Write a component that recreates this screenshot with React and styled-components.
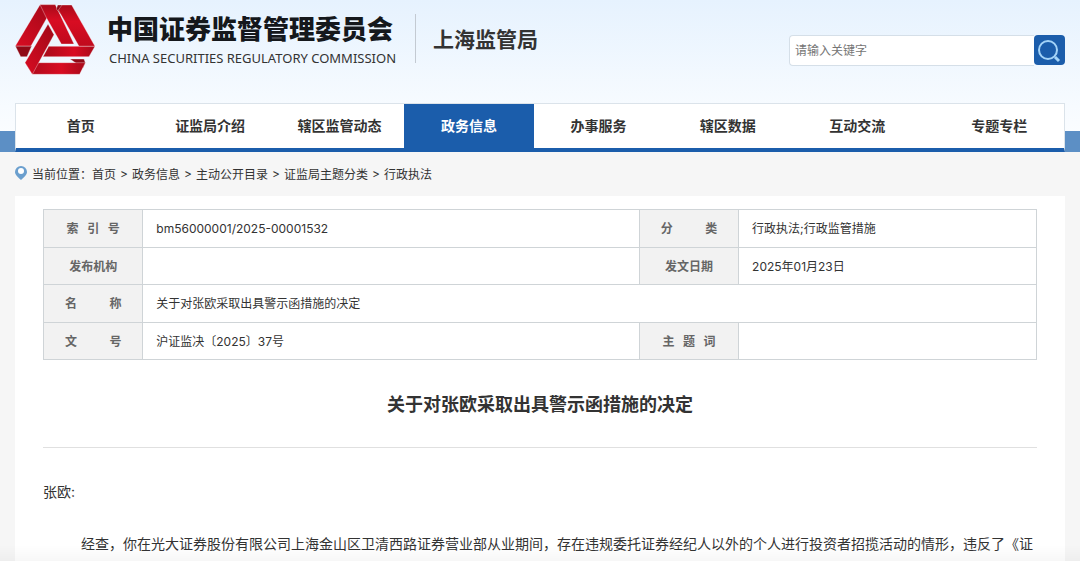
import React from 'react';
import styled, { createGlobalStyle } from 'styled-components';

const GlobalStyle = createGlobalStyle`
  * {
    box-sizing: border-box;
  }

  body {
    margin: 0;
    background: #f6f6f6;
    color: #333;
    font-family: Inter, 'Noto Sans CJK SC', sans-serif;
    font-size: 12px;
  }

  a {
    color: inherit;
    text-decoration: none;
  }
`;

const Page = styled.div`
  min-height: 100vh;
  display: flex;
  flex-direction: column;
`;

const Header = styled.header`
  background: linear-gradient(#e6f2fe, #f7fbff 70%, #fdfeff);
`;

const Masthead = styled.div`
  display: flex;
  align-items: flex-start;
  height: 103px;
  padding: 4px 15px 0;
`;

const Emblem = styled.svg`
  flex: none;
  width: 81px;
  height: 72px;
`;

const Brand = styled.a`
  margin: 8px 0 0 11px;
  color: #15181c;
`;

const BrandName = styled.div`
  font-size: 26px;
  line-height: 36px;
  font-weight: 900;
  white-space: nowrap;
`;

const BrandLatin = styled.div`
  padding-left: 2px;
  color: #333;
  font-family: 'Noto Sans', sans-serif;
  font-size: 13px;
  line-height: 20px;
  white-space: nowrap;
`;

const Bureau = styled.div`
  display: flex;
  align-items: flex-end;
  height: 49px;
  margin: 10px 0 0 19px;
  padding-left: 17px;
  border-left: 1px solid #c3cad2;
  font-size: 21px;
  line-height: 46px;
  font-weight: 700;
  white-space: nowrap;
`;

const Search = styled.form`
  display: flex;
  width: 276px;
  margin: 31px 0 0 auto;
`;

const SearchInput = styled.input`
  flex: 1;
  min-width: 0;
  height: 31px;
  padding: 0 5px;
  border: 1px solid #d5dfe8;
  border-right: 0;
  border-radius: 4px 0 0 4px;
  background: #fff;
  font: inherit;
  outline: 0;

  &::placeholder {
    color: #757575;
  }
`;

const SearchButton = styled.button`
  display: flex;
  width: 31px;
  height: 30px;
  padding: 0;
  border: 0;
  border-radius: 4px;
  background: #1b5dab;
  cursor: pointer;
`;

const NavBand = styled.div`
  padding: 0 15px;
  background: linear-gradient(transparent 28px, #5c8fc5 28px);
`;

const Nav = styled.nav`
  display: flex;
  height: 49px;
  border: 1px solid #dbe3ea;
  border-bottom: 4px solid #1b5dab;
  background: #fff;
`;

const NavItem = styled.a`
  flex: 0 0 12.35%;
  line-height: 44px;
  font-size: 14px;
  font-weight: 700;
  text-align: center;
  white-space: nowrap;
  color: ${props => (props.$active ? '#fff' : '#333')};
  background: ${props => (props.$active ? '#1b5dab' : 'transparent')};

  &:last-child {
    margin-left: auto;
  }
`;

const Breadcrumb = styled.nav`
  display: flex;
  align-items: center;
  gap: 4px;
  height: 44px;
  padding: 0 15px 2px;
  white-space: nowrap;

  svg {
    width: 13px;
    height: 16px;
  }
`;

const Panel = styled.main`
  flex: 1;
  margin: 0 15px;
  padding: 13px 28px 0;
  background: #fff;
`;

const InfoTable = styled.table`
  width: 100%;
  height: 151px;
  border-collapse: collapse;
  table-layout: fixed;

  th,
  td {
    padding: 2px 0 0;
    border: 1px solid #cfd4d7;
    line-height: 20px;
  }

  th {
    background: #f2f2f2;
    color: #666;
    font-weight: 700;
    white-space: pre;
  }

  td {
    padding-left: 13px;
  }
`;

const Title = styled.h1`
  margin: 0;
  padding: 31px 0 28px;
  border-bottom: 1px solid #e0e0e0;
  font-size: 18px;
  line-height: 28px;
  font-weight: 700;
  text-align: center;
`;

const Article = styled.article`
  padding-top: 31px;
  font-size: 14px;
  line-height: 26px;

  p {
    margin: 0 0 26px;
  }
`;

const Paragraph = styled.p`
  text-indent: 38px;
`;

const BottomFade = styled.div`
  position: fixed;
  right: 0;
  bottom: 0;
  left: 0;
  height: 16px;
  background: linear-gradient(transparent, rgba(0, 0, 0, 0.03));
  pointer-events: none;
`;

const navItems = [
  '首页',
  '证监局介绍',
  '辖区监管动态',
  '政务信息',
  '办事服务',
  '辖区数据',
  '互动交流',
  '专题专栏',
];

const crumbs = ['首页', '政务信息', '主动公开目录', '证监局主题分类', '行政执法'];

// pads short labels so they line up with the four-character ones
const spread = label =>
  label.split('').join(label.length === 2 ? '\u2003\u2003\u00a0\u00a0\u00a0' : '\u00a0\u00a0\u00a0');

const Logo = () => (
  <Emblem viewBox="45 12 243 216" aria-hidden="true">
    <defs>
      <linearGradient id="down" x1="0" y1="0" x2="0" y2="1">
        <stop offset="0" stopColor="#a80a1a" />
        <stop offset="0.4" stopColor="#d80c22" />
        <stop offset="1" stopColor="#c00a1d" />
      </linearGradient>
      <linearGradient id="across" x1="0" y1="0" x2="1" y2="0">
        <stop offset="0" stopColor="#a80a1a" />
        <stop offset="0.6" stopColor="#d80c22" />
        <stop offset="1" stopColor="#a80a1a" />
      </linearGradient>
      <linearGradient id="rise" x1="0" y1="1" x2="1" y2="0">
        <stop offset="0" stopColor="#d80c22" />
        <stop offset="1" stopColor="#a00818" />
      </linearGradient>
    </defs>
    <g stroke="#fff" strokeWidth="1" strokeLinejoin="round">
      <path d="M46 138H95L81 170H62Z" fill="#8f0916" />
      <path d="M120 14H166L141 53L93 138H46Z" fill="url(#rise)" />
      <path d="M120 14H166L222 132H184L138 51Z" fill="url(#down)" />
      <path d="M173 15H205L187 48L169 27Z" fill="#8f0916" />
      <path d="M186 15H215L285 139H237L175 30Z" fill="url(#down)" />
      <path d="M146 139H285L267 170H129Z" fill="url(#across)" />
      <path d="M210 177H252L256 188L249 204Z" fill="#8f0916" />
      <path d="M76 188H226L256 188L239 223H97Z" fill="url(#across)" />
      <path d="M144 72L162 104L97 223L75 188Z" fill="url(#rise)" />
    </g>
  </Emblem>
);

const App = () => (
  <Page>
    <GlobalStyle />
    <Header>
      <Masthead>
        <Logo />
        <Brand href="#">
          <BrandName>中国证券监督管理委员会</BrandName>
          <BrandLatin>CHINA SECURITIES REGULATORY COMMISSION</BrandLatin>
        </Brand>
        <Bureau>上海监管局</Bureau>
        <Search onSubmit={event => event.preventDefault()}>
          <SearchInput type="text" placeholder="请输入关键字" aria-label="请输入关键字" />
          <SearchButton type="submit" aria-label="搜索">
            <svg width="31" height="30" fill="none" stroke="#a3d3f8">
              <circle cx="14" cy="15" r="9" strokeWidth="2" />
              <path d="M21 22L25 26" strokeWidth="3" />
            </svg>
          </SearchButton>
        </Search>
      </Masthead>
      <NavBand>
        <Nav>
          {navItems.map(item => (
            <NavItem key={item} href="#" $active={item === '政务信息'}>
              {item}
            </NavItem>
          ))}
        </Nav>
      </NavBand>
    </Header>
    <Breadcrumb>
      <svg viewBox="0 0 13 16" aria-hidden="true">
        <path d="M6 1a6 6 0 0 0-6 6c0 3 3 5 6 8c3-3 6-5 6-8a6 6 0 0 0-6-6Z" fill="#6b9fce" />
        <circle cx="6" cy="6" r="3" fill="#fff" />
      </svg>
      <span>
        当前位置：<a href="#">{crumbs[0]}</a>
      </span>
      {crumbs.slice(1).map(crumb => (
        <React.Fragment key={crumb}>
          <span>&gt;</span>
          <a href="#">{crumb}</a>
        </React.Fragment>
      ))}
    </Breadcrumb>
    <Panel>
      <InfoTable>
        <colgroup>
          <col width="10%" />
          <col width="50%" />
          <col width="10%" />
          <col width="30%" />
        </colgroup>
        <tbody>
          <tr>
            <th scope="row">{spread('索引号')}</th>
            <td>bm56000001/2025-00001532</td>
            <th scope="row">{spread('分类')}</th>
            <td>行政执法;行政监管措施</td>
          </tr>
          <tr>
            <th scope="row">发布机构</th>
            <td />
            <th scope="row">发文日期</th>
            <td>2025年01月23日</td>
          </tr>
          <tr>
            <th scope="row">{spread('名称')}</th>
            <td colSpan="3">关于对张欧采取出具警示函措施的决定</td>
          </tr>
          <tr>
            <th scope="row">{spread('文号')}</th>
            <td>沪证监决〔2025〕37号</td>
            <th scope="row">{spread('主题词')}</th>
            <td />
          </tr>
        </tbody>
      </InfoTable>
      <Title>关于对张欧采取出具警示函措施的决定</Title>
      <Article>
        <p>张欧:</p>
        <Paragraph>
          经查，你在光大证券股份有限公司上海金山区卫清西路证券营业部从业期间，存在违规委托证券经纪人以外的个人进行投资者招揽活动的情形，违反了《证
        </Paragraph>
      </Article>
    </Panel>
    <BottomFade />
  </Page>
);

export default App;
